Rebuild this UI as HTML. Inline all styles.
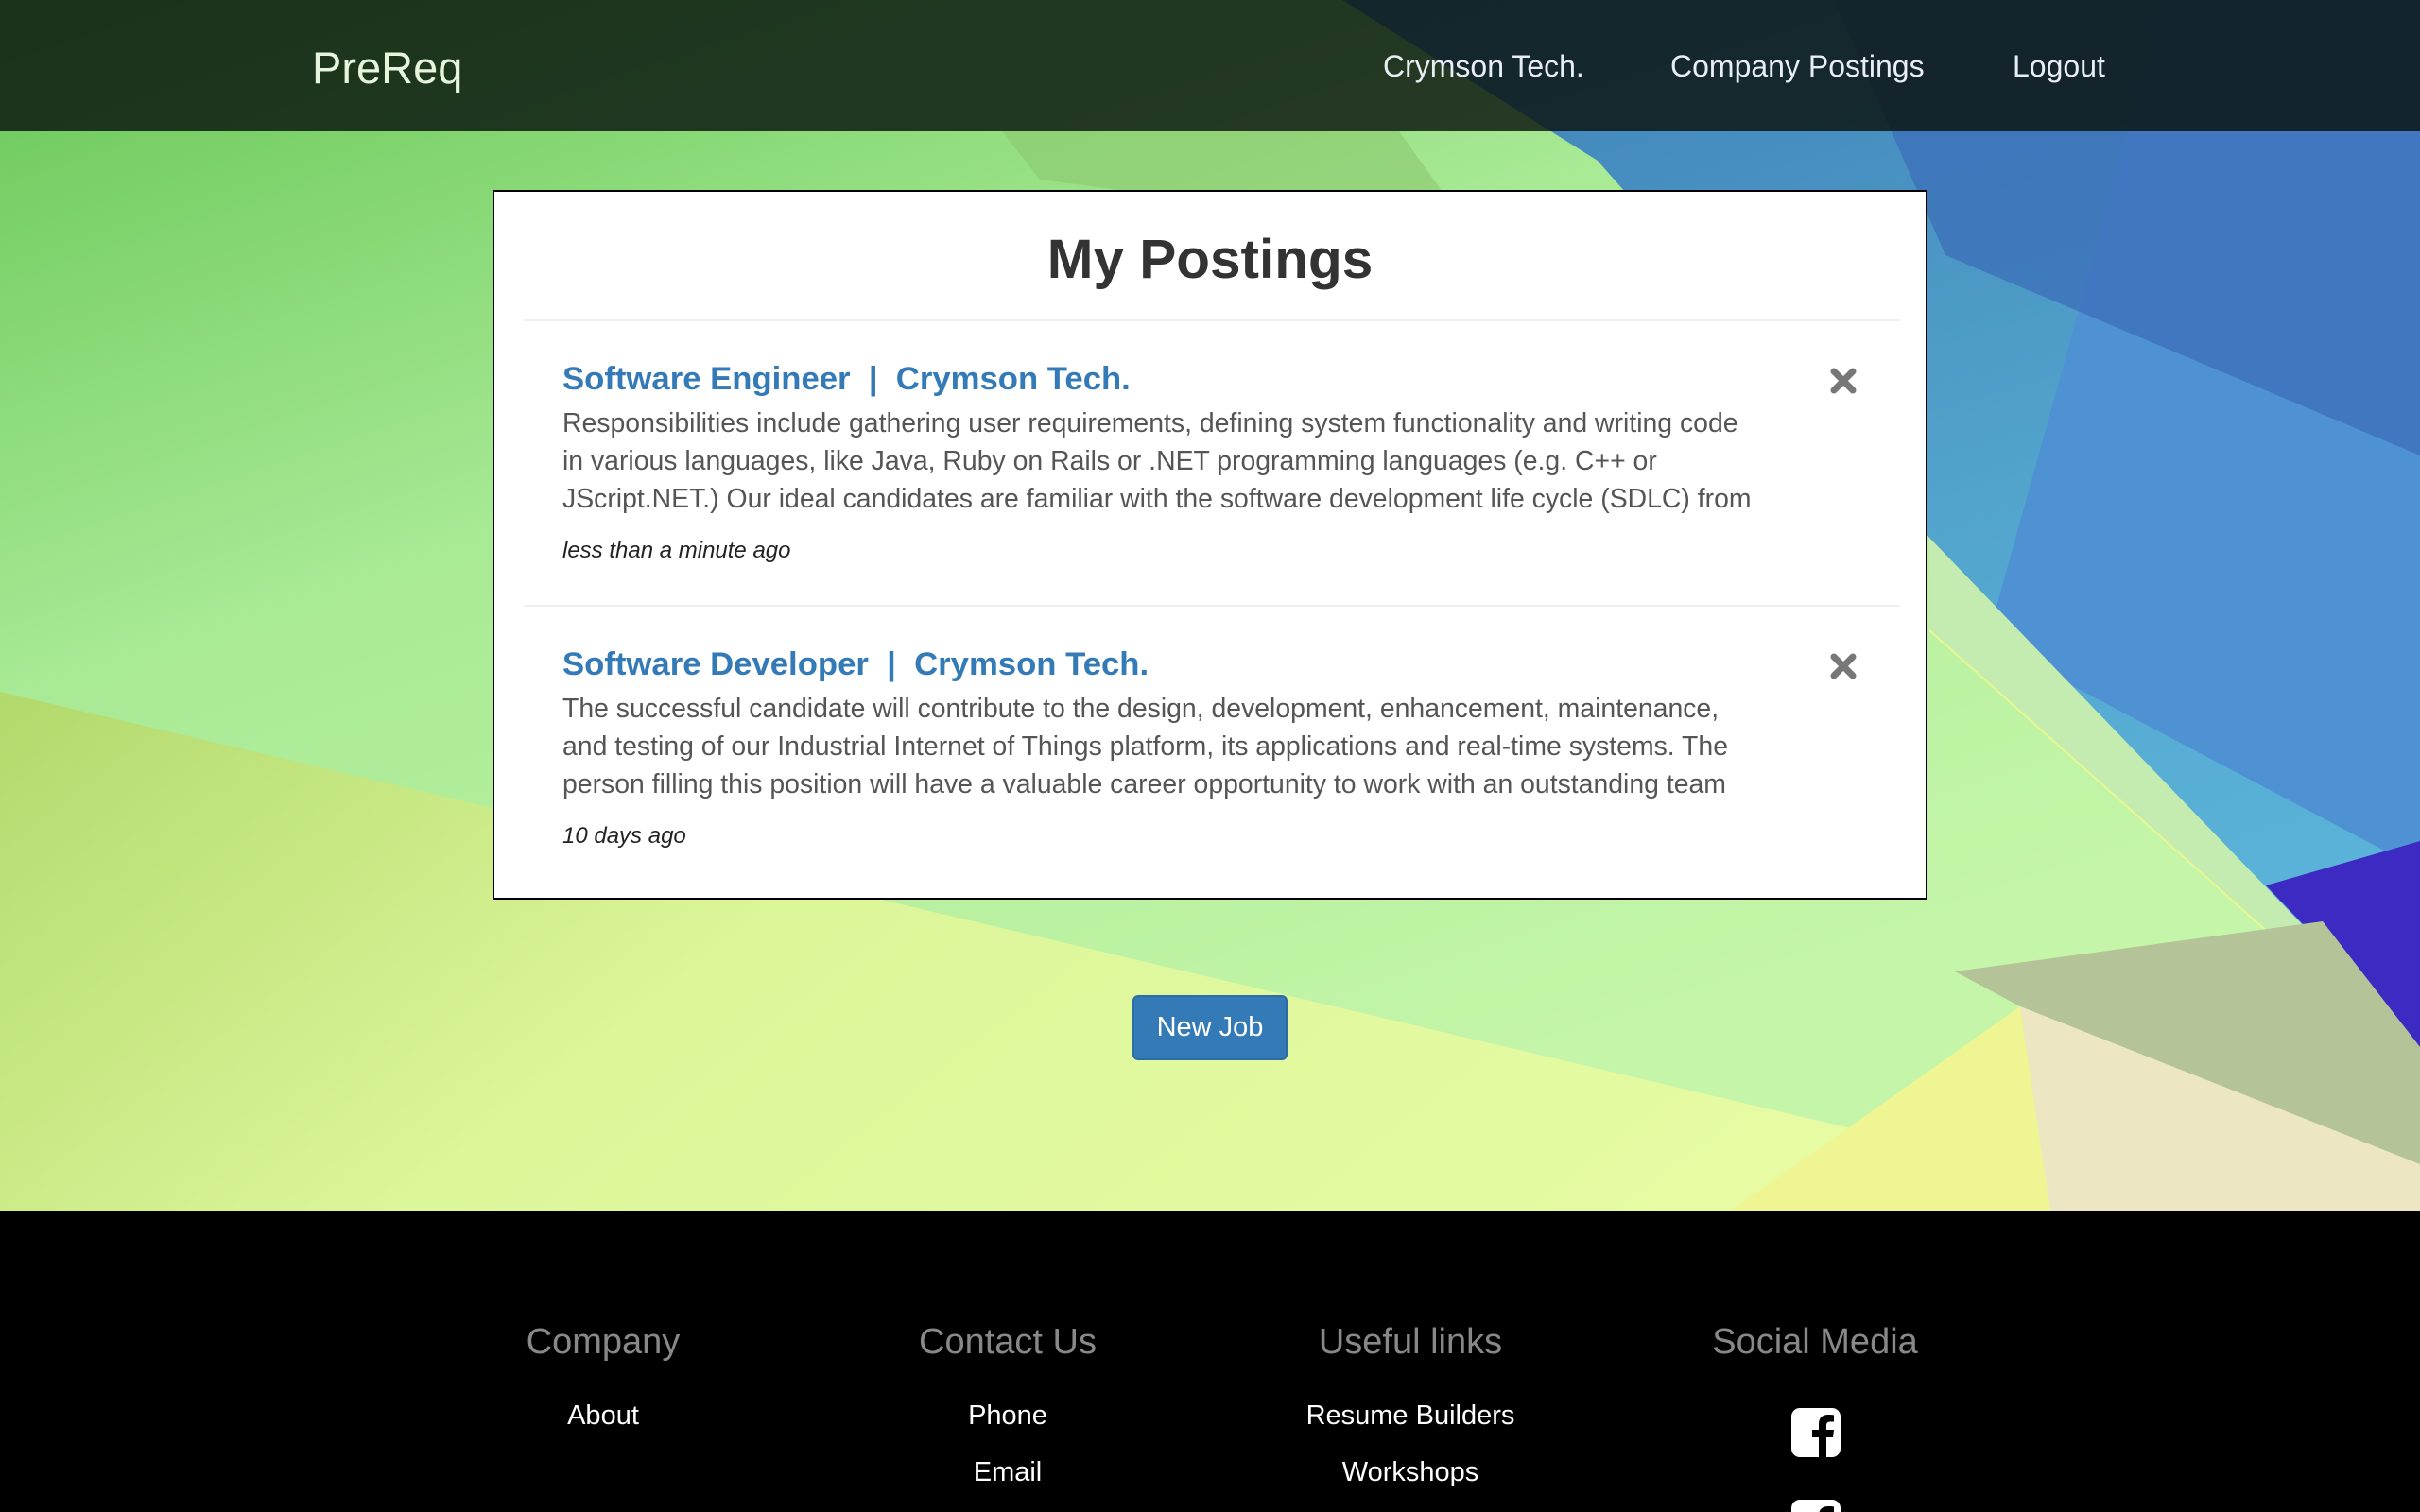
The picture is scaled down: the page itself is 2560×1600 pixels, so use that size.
<!DOCTYPE html>
<html><head><meta charset="utf-8"><style>
*{margin:0;padding:0;box-sizing:border-box}
html,body{width:2560px;height:1600px;overflow:hidden;font-family:"Liberation Sans",Arial,sans-serif}
#bg{position:absolute;left:0;top:0;width:2560px;height:1282px}
.nav{position:absolute;left:0;top:0;width:2560px;height:139px;background:rgba(10,18,14,0.82)}
.brand{position:absolute;left:330px;top:44px;font-size:47px;color:#e6f5dc;}
.nl{position:absolute;top:52px;font-size:32px;color:#e8eef4}
.card{position:absolute;left:521px;top:201px;width:1518px;height:751px;background:#fff;border:2px solid #000}
.card h1{position:absolute;left:0;width:100%;text-align:center;font-size:58.5px;font-weight:bold;color:#333;top:38px}
.hr{position:absolute;left:31px;width:1456px;height:2px;background:#eee}
.item{position:absolute;left:72px;width:1300px}
.t{font-size:34.7px;font-weight:bold;color:#337ab7;white-space:nowrap}
.d{font-size:28.4px;line-height:40px;color:#555;height:118px;overflow:hidden;margin-top:7px;width:1262px}
.tm{font-size:24px;font-style:italic;color:#222;margin-top:23px}
.x{position:absolute;left:1412px;width:30px;height:28px}
.btn{position:absolute;left:1198px;top:1053px;width:164px;height:69px;background:#337ab7;border:2px solid #2e6da4;border-radius:6px;color:#fff;font-size:29px;text-align:center;line-height:64px}
.foot{position:absolute;left:0;top:1282px;width:2560px;height:318px;background:#000;overflow:hidden}
.fc{position:absolute;width:500px;margin-left:-250px;text-align:center;top:0;height:318px}
.fh{font-size:38px;color:#888;position:absolute;top:117px;width:100%}
.fl{font-size:29px;color:#fff;position:absolute;width:100%}
</style></head><body>
<svg id="bg" viewBox="0 0 2560 1282" xmlns="http://www.w3.org/2000/svg">
<defs>
<linearGradient id="g1" x1="0" y1="0" x2="0.6" y2="0.9"><stop offset="0" stop-color="#66c655"/><stop offset="0.45" stop-color="#a9ea96"/><stop offset="1" stop-color="#c4f5a8"/></linearGradient>
<linearGradient id="g2" x1="0" y1="0" x2="1" y2="0.3"><stop offset="0" stop-color="#b2d96c"/><stop offset="0.4" stop-color="#dcf69a"/><stop offset="1" stop-color="#e8fca4"/></linearGradient>
<linearGradient id="g3" x1="0" y1="0" x2="0.3" y2="1"><stop offset="0" stop-color="#3f80b8"/><stop offset="0.6" stop-color="#52a4cc"/><stop offset="1" stop-color="#5ab2d8"/></linearGradient>
</defs>
<rect width="2560" height="1282" fill="url(#g1)"/>
<polygon points="0,732 2560,1336 2560,1282 0,1282" fill="url(#g2)"/>
<polygon points="1060,139 1480,139 1560,250 1100,190" fill="#8cc870" opacity="0.6"/>
<polygon points="1420,0 2560,0 2560,1108 2041,569 1690,170" fill="url(#g3)"/>
<polygon points="2290,0 2560,0 2560,920 2102,678" fill="#4e92d4"/>
<polygon points="1940,0 2560,0 2560,482 2058,270" fill="#3a6cb8" opacity="0.7"/>
<polygon points="2041,569 2560,1108 2560,1130 2041,667" fill="#c4ecb0"/>
<line x1="2041" y1="667" x2="2560" y2="1130" stroke="#e8f890" stroke-width="2"/>
<polygon points="2397,937 2560,890 2560,1108" fill="#3d2ac2"/>
<polygon points="2068,1028 2457,975 2560,1108 2560,1232 2137,1065" fill="#b4c498"/>
<polygon points="2137,1065 2560,1232 2560,1282 2169,1282" fill="#ece7c2"/>
<polygon points="1830,1282 2137,1065 2169,1282" fill="#eef592"/>
</svg>
<div class="nav"><div class="brand">PreReq</div>
<div class="nl" style="left:1463px">Crymson Tech.</div>
<div class="nl" style="left:1767px">Company Postings</div>
<div class="nl" style="left:2129px">Logout</div></div>
<div class="card">
<h1>My Postings</h1>
<div class="hr" style="top:135px"></div>
<div class="item" style="top:179px"><div class="t">Software Engineer &nbsp;|&nbsp; Crymson Tech.</div>
<div class="d">Responsibilities include gathering user requirements, defining system functionality and writing code in various languages, like Java, Ruby on Rails or .NET programming languages (e.g. C++ or JScript.NET.) Our ideal candidates are familiar with the software development life cycle (SDLC) from preliminary system analysis to tests and deployment.</div>
<div class="tm">less than a minute ago</div></div>
<svg class="x" style="top:186px" viewBox="0 0 30 28"><path d="M5 4L25 24M25 4L5 24" stroke="#777" stroke-width="7" stroke-linecap="round"/></svg>
<div class="hr" style="top:437px"></div>
<div class="item" style="top:481px"><div class="t">Software Developer &nbsp;|&nbsp; Crymson Tech.</div>
<div class="d">The successful candidate will contribute to the design, development, enhancement, maintenance, and testing of our Industrial Internet of Things platform, its applications and real-time systems. The person filling this position will have a valuable career opportunity to work with an outstanding team of engineers.</div>
<div class="tm">10 days ago</div></div>
<svg class="x" style="top:488px" viewBox="0 0 30 28"><path d="M5 4L25 24M25 4L5 24" stroke="#777" stroke-width="7" stroke-linecap="round"/></svg>
</div>
<div class="btn">New Job</div>
<div class="foot">
<div class="fc" style="left:638px"><div class="fh">Company</div><div class="fl" style="top:200px">About</div></div>
<div class="fc" style="left:1066px"><div class="fh">Contact Us</div><div class="fl" style="top:200px">Phone</div><div class="fl" style="top:260px">Email</div></div>
<div class="fc" style="left:1492px"><div class="fh">Useful links</div><div class="fl" style="top:200px">Resume Builders</div><div class="fl" style="top:260px">Workshops</div></div>
<div class="fc" style="left:1920px"><div class="fh">Social Media</div>
<svg style="position:absolute;left:225px;top:208px" width="52" height="52" viewBox="0 0 52 52"><rect width="52" height="52" rx="9" fill="#fff"/><path d="M29 52V31h-7v-8h7v-6c0-7 4-10 10-10 3 0 5 0 6 .5v7h-4c-3 0-4 1.5-4 4V23h8l-1 8h-7v21z" fill="#000"/></svg>
<svg style="position:absolute;left:225px;top:305px" width="52" height="52" viewBox="0 0 52 52"><rect width="52" height="52" rx="9" fill="#fff"/><path d="M29 52V31h-7v-8h7v-6c0-7 4-10 10-10 3 0 5 0 6 .5v7h-4c-3 0-4 1.5-4 4V23h8l-1 8h-7v21z" fill="#000"/></svg>
</div>
</div>
</body></html>
